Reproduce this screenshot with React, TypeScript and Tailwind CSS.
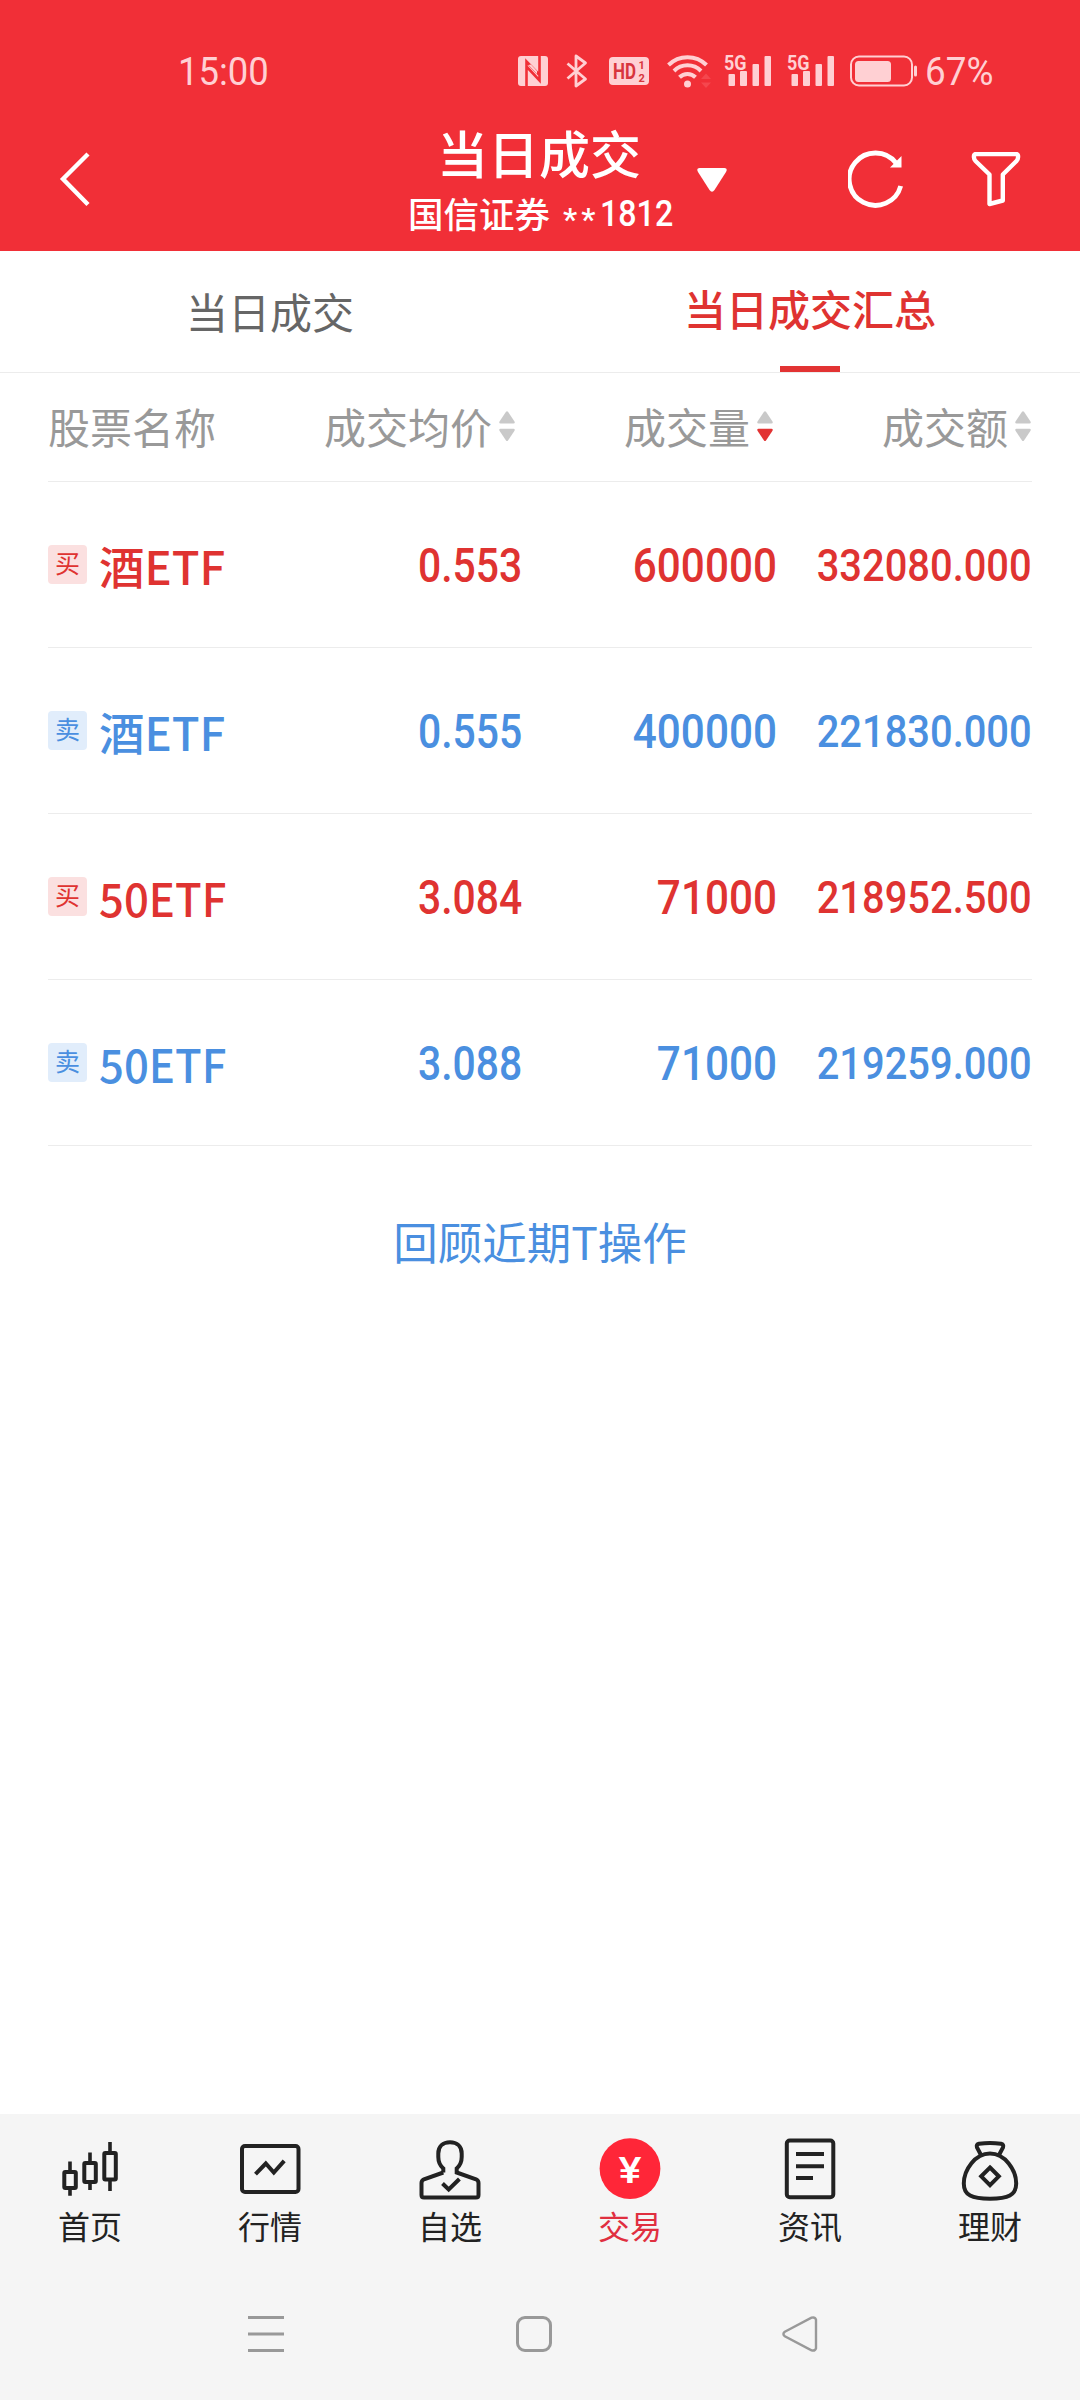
import type { ReactNode } from "react";
import clsx from "clsx";

type Side = "buy" | "sell";

const trades: {
  side: Side;
  name: string;
  price: string;
  volume: string;
  amount: string;
}[] = [
  { side: "buy", name: "酒ETF", price: "0.553", volume: "600000", amount: "332080.000" },
  { side: "sell", name: "酒ETF", price: "0.555", volume: "400000", amount: "221830.000" },
  { side: "buy", name: "50ETF", price: "3.084", volume: "71000", amount: "218952.500" },
  { side: "sell", name: "50ETF", price: "3.088", volume: "71000", amount: "219259.000" },
];

const Signal = () => (
  <svg className="-mt-[6px]" width="48" height="40" viewBox="0 -6 48 40" fill="currentColor">
    <text
      x="0"
      y="15.500"
      textLength="22.500"
      lengthAdjust="spacingAndGlyphs"
      className="font-['Roboto',sans-serif] text-[21px] font-bold"
    >
      5G
    </text>
    <rect x="4.500" y="20" width="6.500" height="12" rx="1" />
    <rect x="16" y="17" width="7" height="15" rx="1" />
    <rect x="28.500" y="10" width="6.500" height="22" rx="1" />
    <rect x="40.500" y="2" width="6.500" height="30" rx="1" />
  </svg>
);

const StatusBar = () => (
  <div className="flex h-[142px] items-center pl-[178px] font-['Roboto',sans-serif] text-[38px] leading-none text-[#ffd0d3]">
    <span className="w-[340px]">
      <span className="inline-block origin-left translate-y-[1px] scale-x-[0.96]">15:00</span>
    </span>
    <svg width="30" height="30" viewBox="0 0 30 30">
      <rect width="30" height="30" rx="3" fill="currentColor" />
      <path d="M8.500 30V5.500l13.500 14M21.500 0v24.500l-13-14" fill="none" stroke="#f12f37" strokeWidth="2.600" />
      <path d="M10.500 9l8.500 9v-3l-6-6.500z" fill="currentColor" />
    </svg>
    <svg className="ml-[18px]" width="22" height="34" viewBox="0 0 22 34" fill="none" stroke="currentColor" strokeWidth="2.800">
      <path d="M1.500 9.500l18 15.500-9.500 7V2l9.500 7-18 15.500" strokeLinejoin="round" />
    </svg>
    <svg className="ml-[21px]" width="40" height="28" viewBox="0 0 40 28">
      <rect width="40" height="28" rx="4" fill="currentColor" />
      <g fill="#d8353d" className="font-bold">
        <text x="4" y="21.500" fontSize="22" textLength="23" lengthAdjust="spacingAndGlyphs">
          HD
        </text>
        <text x="29.500" y="11.800" fontSize="11">1</text>
        <text x="29.500" y="24.900" fontSize="11">2</text>
      </g>
    </svg>
    <svg className="ml-[18px]" width="46" height="34" viewBox="0 0 46 34" fill="none" stroke="currentColor" strokeWidth="4">
      <path d="M1.500 11a27 27 0 0 1 38 0M7 17a19 19 0 0 1 27 0M12.500 23.300a11.500 11.500 0 0 1 16 0" />
      <circle cx="20.500" cy="30" r="3.500" fill="currentColor" stroke="none" />
      <path d="M34 25l5-5.500 5 5.500zM34 28.500l5 5.500 5-5.500z" fill="#f5474e" stroke="none" />
    </svg>
    <span className="ml-[11px]">
      <Signal />
    </span>
    <span className="ml-[15px]">
      <Signal />
    </span>
    <svg className="ml-[15px]" width="68" height="32" viewBox="0 0 68 32">
      <rect x="1" y="1.500" width="61" height="29" rx="8" fill="none" stroke="currentColor" strokeWidth="2" />
      <rect x="5" y="6" width="36" height="21" rx="3.500" fill="currentColor" />
      <rect x="64" y="10.500" width="3" height="11" rx="1.500" fill="currentColor" />
    </svg>
    <span className="ml-[7px] inline-block origin-left translate-y-[1px] scale-x-[0.97]">67%</span>
  </div>
);

const Header = () => (
  <header className="h-[251px] bg-[#f12f37] text-white">
    <StatusBar />
    <div className="-mt-[17px] flex h-[109px] items-center">
      <svg className="ml-[58px]" width="34" height="58" viewBox="0 0 34 58" fill="none" stroke="currentColor" strokeWidth="4.400">
        <path d="M30 3L5 28l25 25.500" />
      </svg>
      <div className="ml-[276px] flex w-[342px] flex-col items-center">
        <h1 className="text-[51px] leading-[58px] font-medium">当日成交</h1>
        <div className="flex h-[56px] items-center pt-[8px] pl-[2px] text-[35.500px] leading-none font-medium">
          国信证券
          <span className="ml-[13px] w-[37px] translate-y-[6px] font-['Roboto',sans-serif] text-[32px] tracking-[4px]">
            **
          </span>
          <span className="w-[72px] translate-y-[1px] font-['Roboto',sans-serif] text-[37px]">
            <span className="inline-block origin-left scale-x-[0.87]">1812</span>
          </span>
        </div>
      </div>
      <svg className="-ml-[13px]" width="30" height="24" viewBox="0 0 30 24" fill="currentColor">
        <path d="M2.500 0h25q3.500.5 1.500 4L17.500 22q-2.500 3.500-5 0L1 4Q-1 .5 2.500 0z" />
      </svg>
      <svg className="ml-[121px]" width="60" height="60" viewBox="0 0 60 60" fill="none" stroke="currentColor" strokeWidth="4.800">
        <path d="M52.700 36A26.200 26.200 0 1 1 48 13" />
        <path d="M53.500 6v11.500H42z" fill="currentColor" stroke="none" />
      </svg>
      <svg className="ml-[63px]" width="50" height="56" viewBox="0 1 50 56" fill="none" stroke="currentColor" strokeWidth="4.400" strokeLinejoin="round">
        <path d="M5 3h40q2.500 0 2 3.500 0 2-1.500 3.500L31.800 23.500v26L18.500 53V23.500L4.500 10Q3 8.500 3 6.500 2.500 3 5 3z" />
      </svg>
    </div>
  </header>
);

const Tabs = () => (
  <div className="flex h-[122px] border-b border-[#ececec] text-[42px] leading-none">
    <button className="flex-1 pb-[1px] text-[#666]">当日成交</button>
    <button className="flex flex-1 flex-col items-center font-medium text-[#df3331]">
      <span className="pt-[36px]">当日成交汇总</span>
      <span className="mt-auto h-1.5 w-[60px] bg-[#e23333]" />
    </button>
  </div>
);

const Sort = ({ active }: { active?: boolean }) => (
  <svg width="16" height="30" viewBox="0 0 16 30" fill="#c9c9c9">
    <path d="M7 .8q1-1 2 0l6.500 9.700q.8 2-1 2h-13q-1.800 0-1-2z" />
    <path d="M7 29.500q1 1 2 0l6.500-9.700q.8-2-1-2h-13q-1.800 0-1 2z" fill={active ? "#e23333" : undefined} />
  </svg>
);

const columns = "grid grid-cols-[276px_197px_254px_257px] items-center";

const TableHead = () => (
  <div className={clsx(columns, "h-[109px] border-b border-[#ececec] pb-[2px] text-[42px] leading-none text-[#999]")}>
    <span>股票名称</span>
    <span className="flex items-center justify-end gap-[7px] pr-[6px]">
      成交均价
      <Sort />
    </span>
    <span className="flex items-center justify-end gap-[7px] pr-[2px]">
      成交量
      <Sort active />
    </span>
    <span className="flex items-center justify-end gap-[7px] pr-[1px]">
      成交额
      <Sort />
    </span>
  </div>
);

const TradeRow = ({ trade }: { trade: (typeof trades)[number] }) => {
  const buy = trade.side === "buy";

  return (
    <div
      className={clsx(
        columns,
        "h-[166px] border-b border-[#ececec] text-[47.500px] leading-none font-medium",
        buy ? "text-[#df3331]" : "text-[#4a8fe0]"
      )}
    >
      <div className="flex items-center">
        <span
          className={clsx(
            "flex size-[39px] items-center justify-center rounded-[4px] pb-[4px] text-[25px] font-normal",
            buy ? "bg-[#fbe0e0]" : "bg-[#e1edfb]"
          )}
        >
          {buy ? "买" : "卖"}
        </span>
        <span
          className={clsx(
            "ml-[12px] origin-left translate-y-[1px] text-[45.500px]",
            trade.name.startsWith("50") && "scale-x-[0.96]"
          )}
        >
          {trade.name}
        </span>
      </div>
      <div className="translate-x-[1px] translate-y-[2px] text-right font-['Roboto',sans-serif]">
        <span className="inline-block origin-right scale-x-[0.86]">{trade.price}</span>
      </div>
      <div className="translate-x-[2px] translate-y-[2px] text-right font-['Roboto',sans-serif]">
        <span className="inline-block origin-right scale-x-[0.89]">{trade.volume}</span>
      </div>
      <div className="flex translate-y-[1px] justify-end font-['Roboto',sans-serif] text-[45px]">
        <span className="inline-block origin-right scale-x-[0.886]">{trade.amount}</span>
      </div>
    </div>
  );
};

const NavItem = ({ label, active, children }: { label: string; active?: boolean; children: ReactNode }) => (
  <button
    className={clsx(
      "flex flex-col items-center pt-6 text-[32px] leading-none",
      active ? "text-[#e02f3f]" : "text-[#222]"
    )}
  >
    <svg width="64" height="64" viewBox="0 0 64 64" fill="none" stroke="currentColor" strokeWidth="4">
      {children}
    </svg>
    <span className="mt-[7px] font-normal">{label}</span>
  </button>
);

const BottomNav = () => (
  <nav className="grid h-[156px] grid-cols-6">
    <NavItem label="首页">
      <rect x="6.300" y="34" width="11.500" height="16" rx="1" />
      <rect x="26.300" y="25" width="11.500" height="19" rx="1" />
      <rect x="46.300" y="15" width="11.500" height="26.500" rx="1" />
      <path d="M12 23.500V33M12 51v6.700M32 14.500V24M32 45v7M52 4v10M52 42v11" strokeWidth="3.600" />
    </NavItem>
    <NavItem label="行情">
      <rect x="4" y="8" width="56.500" height="46" rx="3" />
      <path d="M17.500 36.200L27.800 25.500l8 9L46.200 22.800" />
    </NavItem>
    <NavItem label="自选">
      <path d="M25.300 34.500V30.500Q20.300 26 20.300 19V15.500C20.300 8.500 25 4.300 32 4.300s11.700 4.200 11.700 11.200V19q0 7-5 11.500v4L58 41.300q2.500 1.200 2.500 3.700V57q0 2.500-2.500 2.500H6Q3.500 59.500 3.500 57V45q0-2.500 2.500-3.700L25.300 34.500" />
      <path d="M24.500 45.500l6.200 6L41.400 41" />
    </NavItem>
    <NavItem label="交易" active>
      <circle cx="32" cy="30.700" r="30.400" fill="#ff2638" stroke="none" />
      <text
        x="20.500"
        y="44.500"
        textLength="23"
        lengthAdjust="spacingAndGlyphs"
        fill="#fff"
        stroke="none"
        className="font-['Roboto',sans-serif] text-[36px] font-medium"
      >
        ¥
      </text>
    </NavItem>
    <NavItem label="资讯">
      <rect x="8.800" y="2.500" width="46.500" height="56.700" rx="3" />
      <path d="M18 16h28M18 28.200h28M18 40h17" />
    </NavItem>
    <NavItem label="理财">
      <path d="M23 17l-4-7.500q-1-3 2-3.700 11-1.500 22 0 3 .7 2 3.700L41 17" />
      <path d="M32 15.500C17 15.500 5.800 32 5.800 45.500 5.800 57.500 14 60.700 32 60.700s26.200-3.200 26.200-15.200C58.200 32 47 15.500 32 15.500z" />
      <path d="M32 29.500l8.800 8.800L32 47.100l-8.800-8.800z" />
    </NavItem>
  </nav>
);

const SystemNav = () => (
  <div className="flex h-[128px] items-center text-[#999]">
    <svg className="ml-[248px]" width="36" height="38" viewBox="0 0 36 38" stroke="currentColor" strokeWidth="3">
      <path d="M0 2.500h36M0 19h36M0 35.500h36" />
    </svg>
    <span className="ml-[232px] size-[36px] rounded-[9px] border-3 border-[#999]" />
    <svg className="ml-[230px]" width="36" height="38" viewBox="0 0 36 38" fill="none" stroke="currentColor" strokeWidth="2.400">
      <path d="M2.800 16.800L29.500 2.700q3.500-1 4.500 2v28.600q-1 3-4.500 2L2.800 21.200q-2.800-2.200 0-4.400z" />
    </svg>
  </div>
);

const App = () => (
  <div className="flex h-[2400px] w-[1080px] flex-col bg-white font-['Noto_Sans_CJK_SC',sans-serif]">
    <Header />
    <Tabs />
    <main className="flex flex-1 flex-col px-12">
      <TableHead />
      {trades.map((trade, index) => (
        <TradeRow key={index} trade={trade} />
      ))}
      <button className="mx-auto mt-[73px] text-[44.500px] leading-none text-[#4a8fe0]">回顾近期T操作</button>
    </main>
    <footer className="h-[286px] bg-[#f5f5f5]">
      <BottomNav />
      <SystemNav />
    </footer>
  </div>
);

export default App;
